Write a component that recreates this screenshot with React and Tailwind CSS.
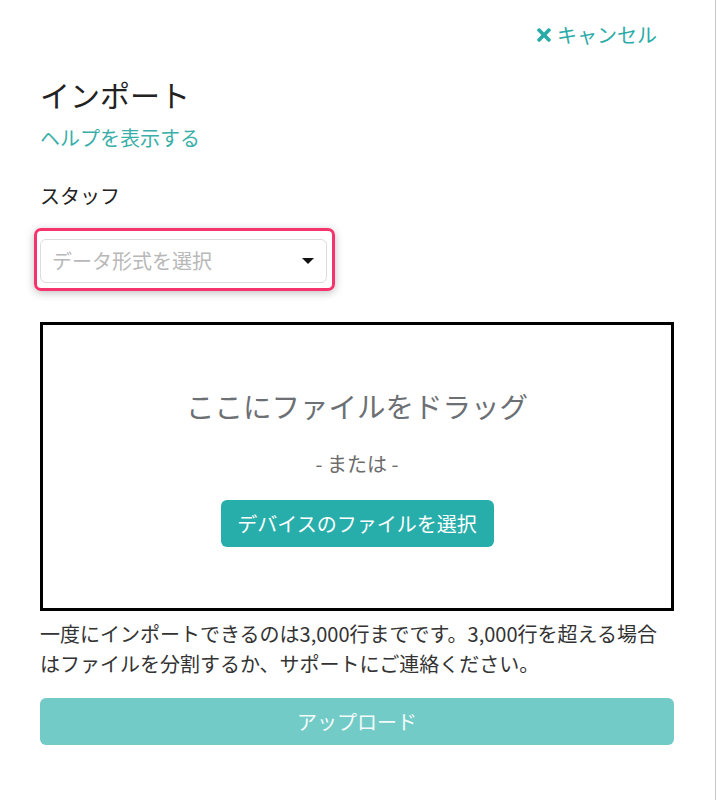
import React from "react";
import { FaTimes } from "react-icons/fa";

export default function App() {
  return (
    <div
      className="w-[716px] h-[800px] bg-white border-r border-[#c8c8c8] pl-[40px] pr-[41px] pt-[21px] flex flex-col"
      style={{ fontFamily: '"Noto Sans CJK JP", "Noto Sans", sans-serif' }}
    >
      <div className="flex justify-end">
        <button className="mr-[17px] flex items-center gap-[3px] text-[20px] leading-[28px] text-[#2aaba7]">
          <FaTimes className="w-[20px] h-[20px]" />
          <span>キャンセル</span>
        </button>
      </div>

      <h1 className="mt-[25px] text-[30px] leading-[40px] text-[#222]">インポート</h1>
      <a className="mt-[10px] text-[20px] leading-[28px] text-[#3aafa9] self-start">ヘルプを表示する</a>

      <div className="mt-[30px] text-[20px] leading-[28px] text-[#222]">スタッフ</div>

      <div className="mt-[18px] -ml-[6px] w-[301px] h-[63px] border-[3px] border-[#f5336c] rounded-[7px] shadow-[0_2px_8px_rgba(0,0,0,0.25)] pl-[3px] pr-[5px] pt-[8px] pb-[3px]">
        <div className="h-[44px] border border-[#dcdcdc] rounded-[6px] flex items-center justify-between pl-[11px] pr-[12px] bg-white">
          <span className="text-[20px] text-[#b8b8b8]">データ形式を選択</span>
          <span className="w-0 h-0 border-l-[6px] border-r-[6px] border-t-[6px] border-l-transparent border-r-transparent border-t-[#111]" />
        </div>
      </div>

      <div className="mt-[31px] h-[289px] border-[3px] border-black flex flex-col items-center justify-center">
        <div className="text-[28.5px] leading-[40px] text-[#6c7075]">ここにファイルをドラッグ</div>
        <div className="mt-[26px] text-[20px] leading-[24px] text-[#6c6c6c]">- または -</div>
        <button className="mt-[24px] w-[273px] h-[47px] rounded-[6px] bg-[#27aeaa] text-white text-[20px]">
          デバイスのファイルを選択
        </button>
      </div>

      <p className="mt-[8px] text-[20px] leading-[30px] text-[#333]">
        一度にインポートできるのは3,000行までです。3,000行を超える場合
        <br />
        はファイルを分割するか、サポートにご連絡ください。
      </p>

      <button className="mt-[19px] h-[47px] w-full rounded-[6px] bg-[#73cbc8] text-[#f3fbfa] text-[20px]">
        アップロード
      </button>
    </div>
  );
}
